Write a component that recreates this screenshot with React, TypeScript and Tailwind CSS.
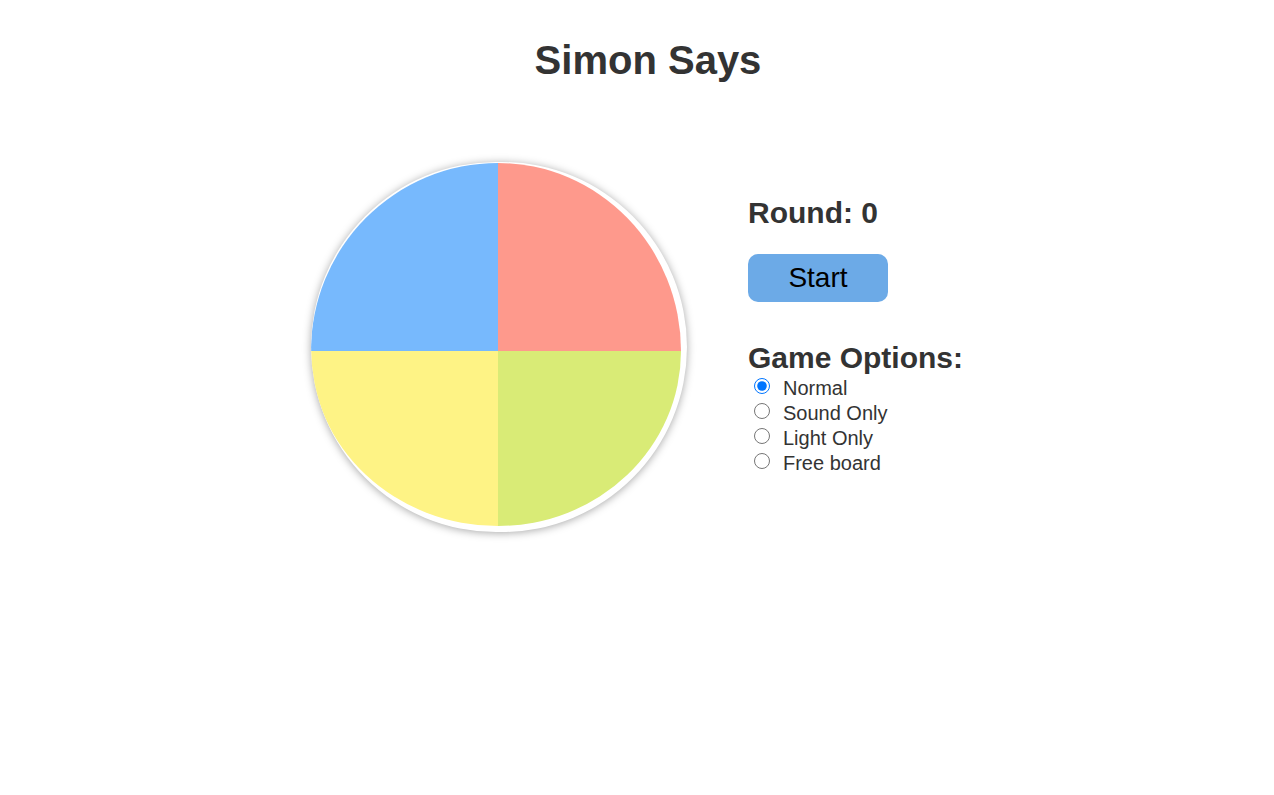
import { useState } from "react";

const options = ["Normal", "Sound Only", "Light Only", "Free board"];

function Board() {
    return (
        <div className="w-[376px] h-[370px] shrink-0 rounded-full bg-white overflow-hidden shadow-[0_1px_8px_rgba(0,0,0,0.35)]">
            <div className="grid grid-cols-[187px_183px] grid-rows-[188px_175px] pt-px">
                <div className="bg-[#77b9fd] rounded-tl-[187px_188px]"></div>
                <div className="bg-[#fe998c] rounded-tr-[183px_188px]"></div>
                <div className="bg-[#fef385] rounded-bl-[187px_175px]"></div>
                <div className="bg-[#d9eb76] rounded-br-[183px_175px]"></div>
            </div>
        </div>
    );
}

function Panel() {
    const [mode, setMode] = useState("Normal");
    return (
        <div className="mt-[34px] text-[#333]">
            <h2 className="text-[30px] font-bold leading-[34px]">Round: 0</h2>
            <button className="mt-[24px] w-[140px] h-[48px] rounded-[10px] bg-[#6caae7] text-black text-[28px] leading-[48px]">
                Start
            </button>
            <h2 className="mt-[39px] text-[30px] font-bold leading-[34px]">Game Options:</h2>
            <div className="flex flex-col">
                {options.map((o) => (
                    <label key={o} className="flex items-center h-[25px] text-[20px]">
                        <input
                            type="radio"
                            name="mode"
                            checked={mode === o}
                            onChange={() => setMode(o)}
                            className="w-4 h-4 m-0 ml-[6px] mr-[13px] -mt-[3px] accent-[#0075ff]"
                        />
                        {o}
                    </label>
                ))}
            </div>
        </div>
    );
}

function App() {
    return (
        <main className="w-full min-h-screen bg-white font-['Liberation_Sans',Arial,sans-serif]">
            <h1 className="pt-[37px] pl-[22px] text-center text-[40px] font-bold leading-[46px] text-[#333]">
                Simon Says
            </h1>
            <section className="mt-[79px] flex justify-center items-start gap-[61px]">
                <Board />
                <Panel />
            </section>
        </main>
    );
}

export default App;
